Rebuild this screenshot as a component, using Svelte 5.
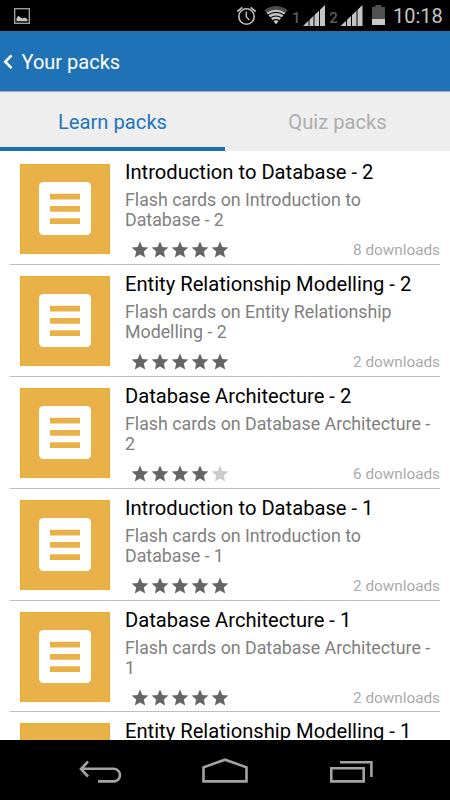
<script>
  let tabs = ['Learn packs', 'Quiz packs'];
  let currentTab = tabs[0];

  let packs = [
    { title: 'Introduction to Database - 2', rating: 5, downloads: 8 },
    { title: 'Entity Relationship Modelling - 2', rating: 5, downloads: 2 },
    { title: 'Database Architecture - 2', rating: 4, downloads: 6 },
    { title: 'Introduction to Database - 1', rating: 5, downloads: 2 },
    { title: 'Database Architecture - 1', rating: 5, downloads: 2 },
    { title: 'Entity Relationship Modelling - 1', rating: 5, downloads: 2 }
  ];

  let stars = [1, 2, 3, 4, 5];

  function selectTab(tab) {
    currentTab = tab;
  }
</script>

<div class="phone">
  <div class="status-bar">
    <svg class="picture" width="16" height="16" viewBox="0 0 16 16">
      <rect x="0.7" y="0.7" width="14.6" height="14.6" fill="none" stroke="#a8a8a8" stroke-width="1.3" />
      <path d="M2.500 13.300V10l1-.8.500-1.200h1l.8 1 1.200.7 1.500.8 1.500-.8h1.500l.8.800 1.200.5v2.300z" fill="#c4c4c4" />
    </svg>

    <!-- alarm, wifi, two sims, battery -->
    <svg class="signals" width="156" height="31" viewBox="0 0 156 31">
      <g fill="none" stroke="#bdbdbd">
        <circle cx="11.500" cy="16.500" r="7.700" stroke-width="1.600" />
        <path d="M11.300 11.500v5.300l3 3.200" stroke-width="1.500" />
        <path d="M2.300 11.500l5-4.200M20.700 11.500l-5-4.200" stroke-width="1.700" />
      </g>
      <path d="M41 24.300L29.500 10.200Q41 1.800 52.600 10.200z" fill="#4d4d4d" />
      <path d="M41 24.300L31.700 12.800Q41 6.800 50.300 12.800z" fill="#c6c6c6" />
      <g fill="none" stroke="#000" stroke-width="1.100">
        <path d="M33 14.900Q41 9.800 49 14.900" />
        <path d="M35.300 17.900Q41 14 46.700 17.900" />
        <path d="M37.600 20.700Q41 18.500 44.400 20.700" />
      </g>
      <text x="57" y="22.800" class="sim">1</text>
      <path d="M68 26L90 5v21z" fill="#c4c4c4" />
      <text x="94.200" y="22.800" class="sim">2</text>
      <path d="M105.500 26L127.500 5v21z" fill="#c4c4c4" />
      <path d="M74 18v8M79 14v12M84.500 9v17M111.500 18v8M116.500 14v12M122 9v17" stroke="#000" stroke-width="1" />
      <path d="M137 7h3.200V5h6.300v2h3.500v12h-13z" fill="#505050" />
      <path d="M137 19h13v6h-13z" fill="#c8c8c8" />
    </svg>
    <span class="clock">10:18</span>
  </div>

  <header>
    <svg width="10" height="16" viewBox="0 0 10 16">
      <path d="M8.600 1.400L2.200 7.800l6.400 6.400" fill="none" stroke="#fff" stroke-width="2.600" />
    </svg>
    <h1>Your packs</h1>
  </header>

  <nav class="tabs">
    {#each tabs as tab}
      <button class="tab" class:active={tab === currentTab} on:click={() => selectTab(tab)}>{tab}</button>
    {/each}
  </nav>

  <main>
    {#each packs as pack}
      <article class="pack">
        <svg class="cover" width="90" height="90" viewBox="0 0 90 90">
          <rect width="90" height="90" fill="#e8b248" />
          <rect x="0.500" y="0.500" width="89" height="89" fill="none" stroke="#e6ad30" />
          <rect x="19" y="18" width="52" height="53" rx="4.500" fill="#fff" />
          <path d="M30 29.700h30v5.800H30zM30 42h30v5.800H30zM30 54.300h30v5.800H30z" fill="#e8b248" />
        </svg>
        <div class="details">
          <h2>{pack.title}</h2>
          <p>Flash cards on {pack.title}</p>
          <div class="meta">
            <div class="stars">
              {#each stars as star}
                <svg class:off={star > pack.rating} width="20" height="18" viewBox="0 0 20 18">
                  <path d="M10 .6l2.400 5.500 6 .5-4.600 4 1.400 6L10 13.400l-5.200 3.200 1.400-6-4.600-4 6-.5z" />
                </svg>
              {/each}
            </div>
            <span class="downloads">{pack.downloads} downloads</span>
          </div>
        </div>
      </article>
    {/each}
  </main>

  <footer>
    <svg width="450" height="60" viewBox="0 0 450 60" fill="none" stroke="#a3a3a3" stroke-width="2.600">
      <path d="M88 21.500L81 29l7 7.500M81 28.800h32.700a6.300 6.300 0 0 1 0 12.600H98" />
      <path d="M203.500 41.400V27.300L225 19.700l21.500 7.600v14.100z" />
      <path d="M331.300 28.300h32.400v13.100h-32.400zM340 22.300h31.400V37" />
    </svg>
  </footer>
</div>

<style>
  :global(body) {
    background-color: #fff;
  }

  .phone {
    display: flex;
    flex-direction: column;
    width: 450px;
    height: 800px;
    overflow: hidden;
    font-family: Roboto, sans-serif;
  }

  .status-bar {
    display: flex;
    align-items: center;
    flex: 0 0 31px;
    background-color: #000;
  }

  .picture {
    margin-left: 14px;
  }

  .signals {
    margin-left: 205px;
    overflow: visible;
  }

  .sim {
    font-size: 15px;
    font-weight: 500;
    fill: #5c5c5c;
  }

  .clock {
    margin-left: 2px;
    font-size: 20px;
    color: #c4c4c4;
  }

  header {
    display: flex;
    align-items: center;
    flex: 0 0 60px;
    padding: 1px 0 0 3px;
    box-sizing: border-box;
    background-color: #2072b6;
    color: #fff;
  }

  h1 {
    margin: 0 0 0 8.5px;
    font-size: 20px;
    font-weight: 400;
  }

  .tabs {
    display: flex;
    flex: 0 0 60px;
    background-color: #eee;
    box-shadow: inset 0 2px 1px -1px #a5a5ad;
  }

  .tab {
    flex: 1;
    padding: 5px 0 0;
    border: none;
    border-bottom: 4px solid transparent;
    background: none;
    font-family: inherit;
    font-size: 20.2px;
    color: #adadad;
    cursor: pointer;
  }

  .tab.active {
    border-bottom-color: #1b71b8;
    color: #2176ba;
  }

  main {
    flex: 1;
    min-height: 0;
    padding: 2px 10px 0;
    overflow: hidden;
  }

  .pack {
    display: flex;
    height: 111.9px;
    padding: 11px 0 0 10px;
    box-sizing: border-box;
    border-bottom: 1px solid #bfbfbf;
  }

  .cover {
    flex: none;
  }

  .details {
    flex: 1;
    min-width: 0;
    padding-left: 15px;
  }

  h2 {
    margin: -4px 0 0;
    font-size: 20.17px;
    font-weight: 400;
    line-height: 24px;
    white-space: nowrap;
    color: #000;
  }

  p {
    height: 40px;
    margin: 6px 0 0;
    padding-right: 6px;
    font-size: 17.8px;
    line-height: 20px;
    color: #808080;
  }

  .meta {
    display: flex;
    align-items: center;
    justify-content: space-between;
    height: 20px;
    margin-top: 10px;
  }

  .stars {
    display: flex;
    padding-left: 5px;
    fill: #666;
  }

  .off {
    fill: #ccc;
  }

  .downloads {
    font-size: 15.3px;
    color: #aaa;
  }

  footer {
    flex: 0 0 60px;
    background-color: #000;
  }

  footer svg {
    display: block;
  }
</style>
